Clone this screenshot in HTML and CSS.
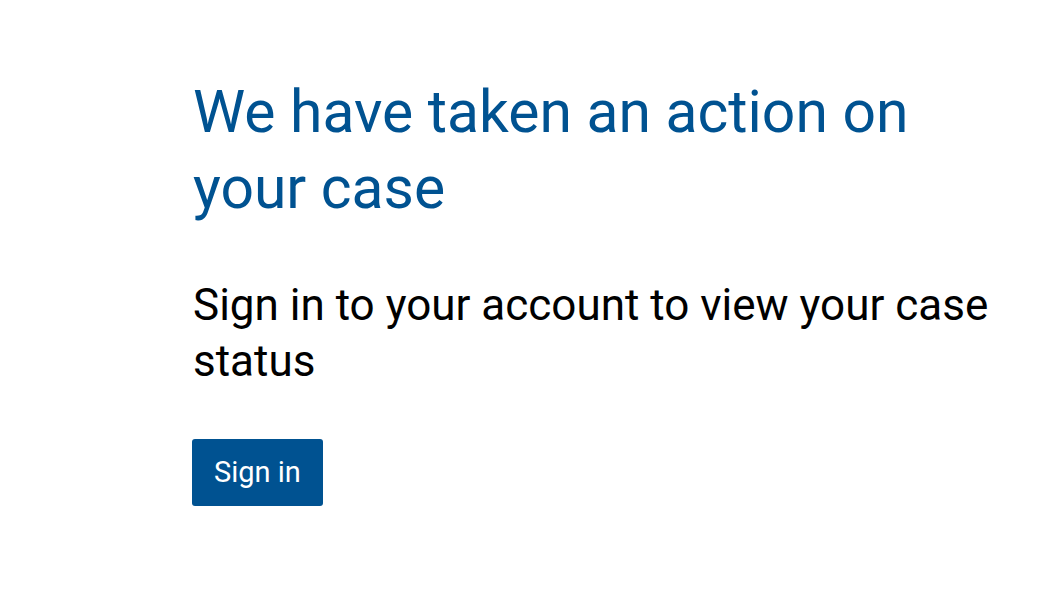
FILE: index.html
```html
<!DOCTYPE html>
<html lang="en">
<head>
<meta charset="utf-8">
<title>Case action</title>
<link rel="stylesheet" href="styles.css">
</head>
<body>
<main class="content">
  <h1 class="title">We have taken an action on your case</h1>
  <p class="lead">Sign in to your account to view your case status</p>
  <a class="btn" href="#">Sign in</a>
</main>
</body>
</html>
```
FILE: styles.css
```css
html, body {
  margin: 0;
  padding: 0;
  background: #ffffff;
}
body {
  font-family: Roboto, "Noto Sans", "Liberation Sans", sans-serif;
  color: #000000;
}
.content {
  padding: 74px 40px 40px 193px;
  display: flex;
  flex-direction: column;
  align-items: flex-start;
}
.title {
  margin: 0;
  font-size: 58.8px;
  line-height: 76px;
  font-weight: 400;
  color: #005291;
  max-width: 800px;
}
.lead {
  margin: 51px 0 0 0;
  font-size: 44px;
  line-height: 56px;
  font-weight: 400;
  max-width: 830px;
}
.btn {
  margin: 50px 0 0 -1px;
  display: inline-block;
  background: #005291;
  color: #ffffff;
  text-decoration: none;
  font-size: 29px;
  line-height: 67px;
  padding: 0 22px;
  border-radius: 3px;
}
```
